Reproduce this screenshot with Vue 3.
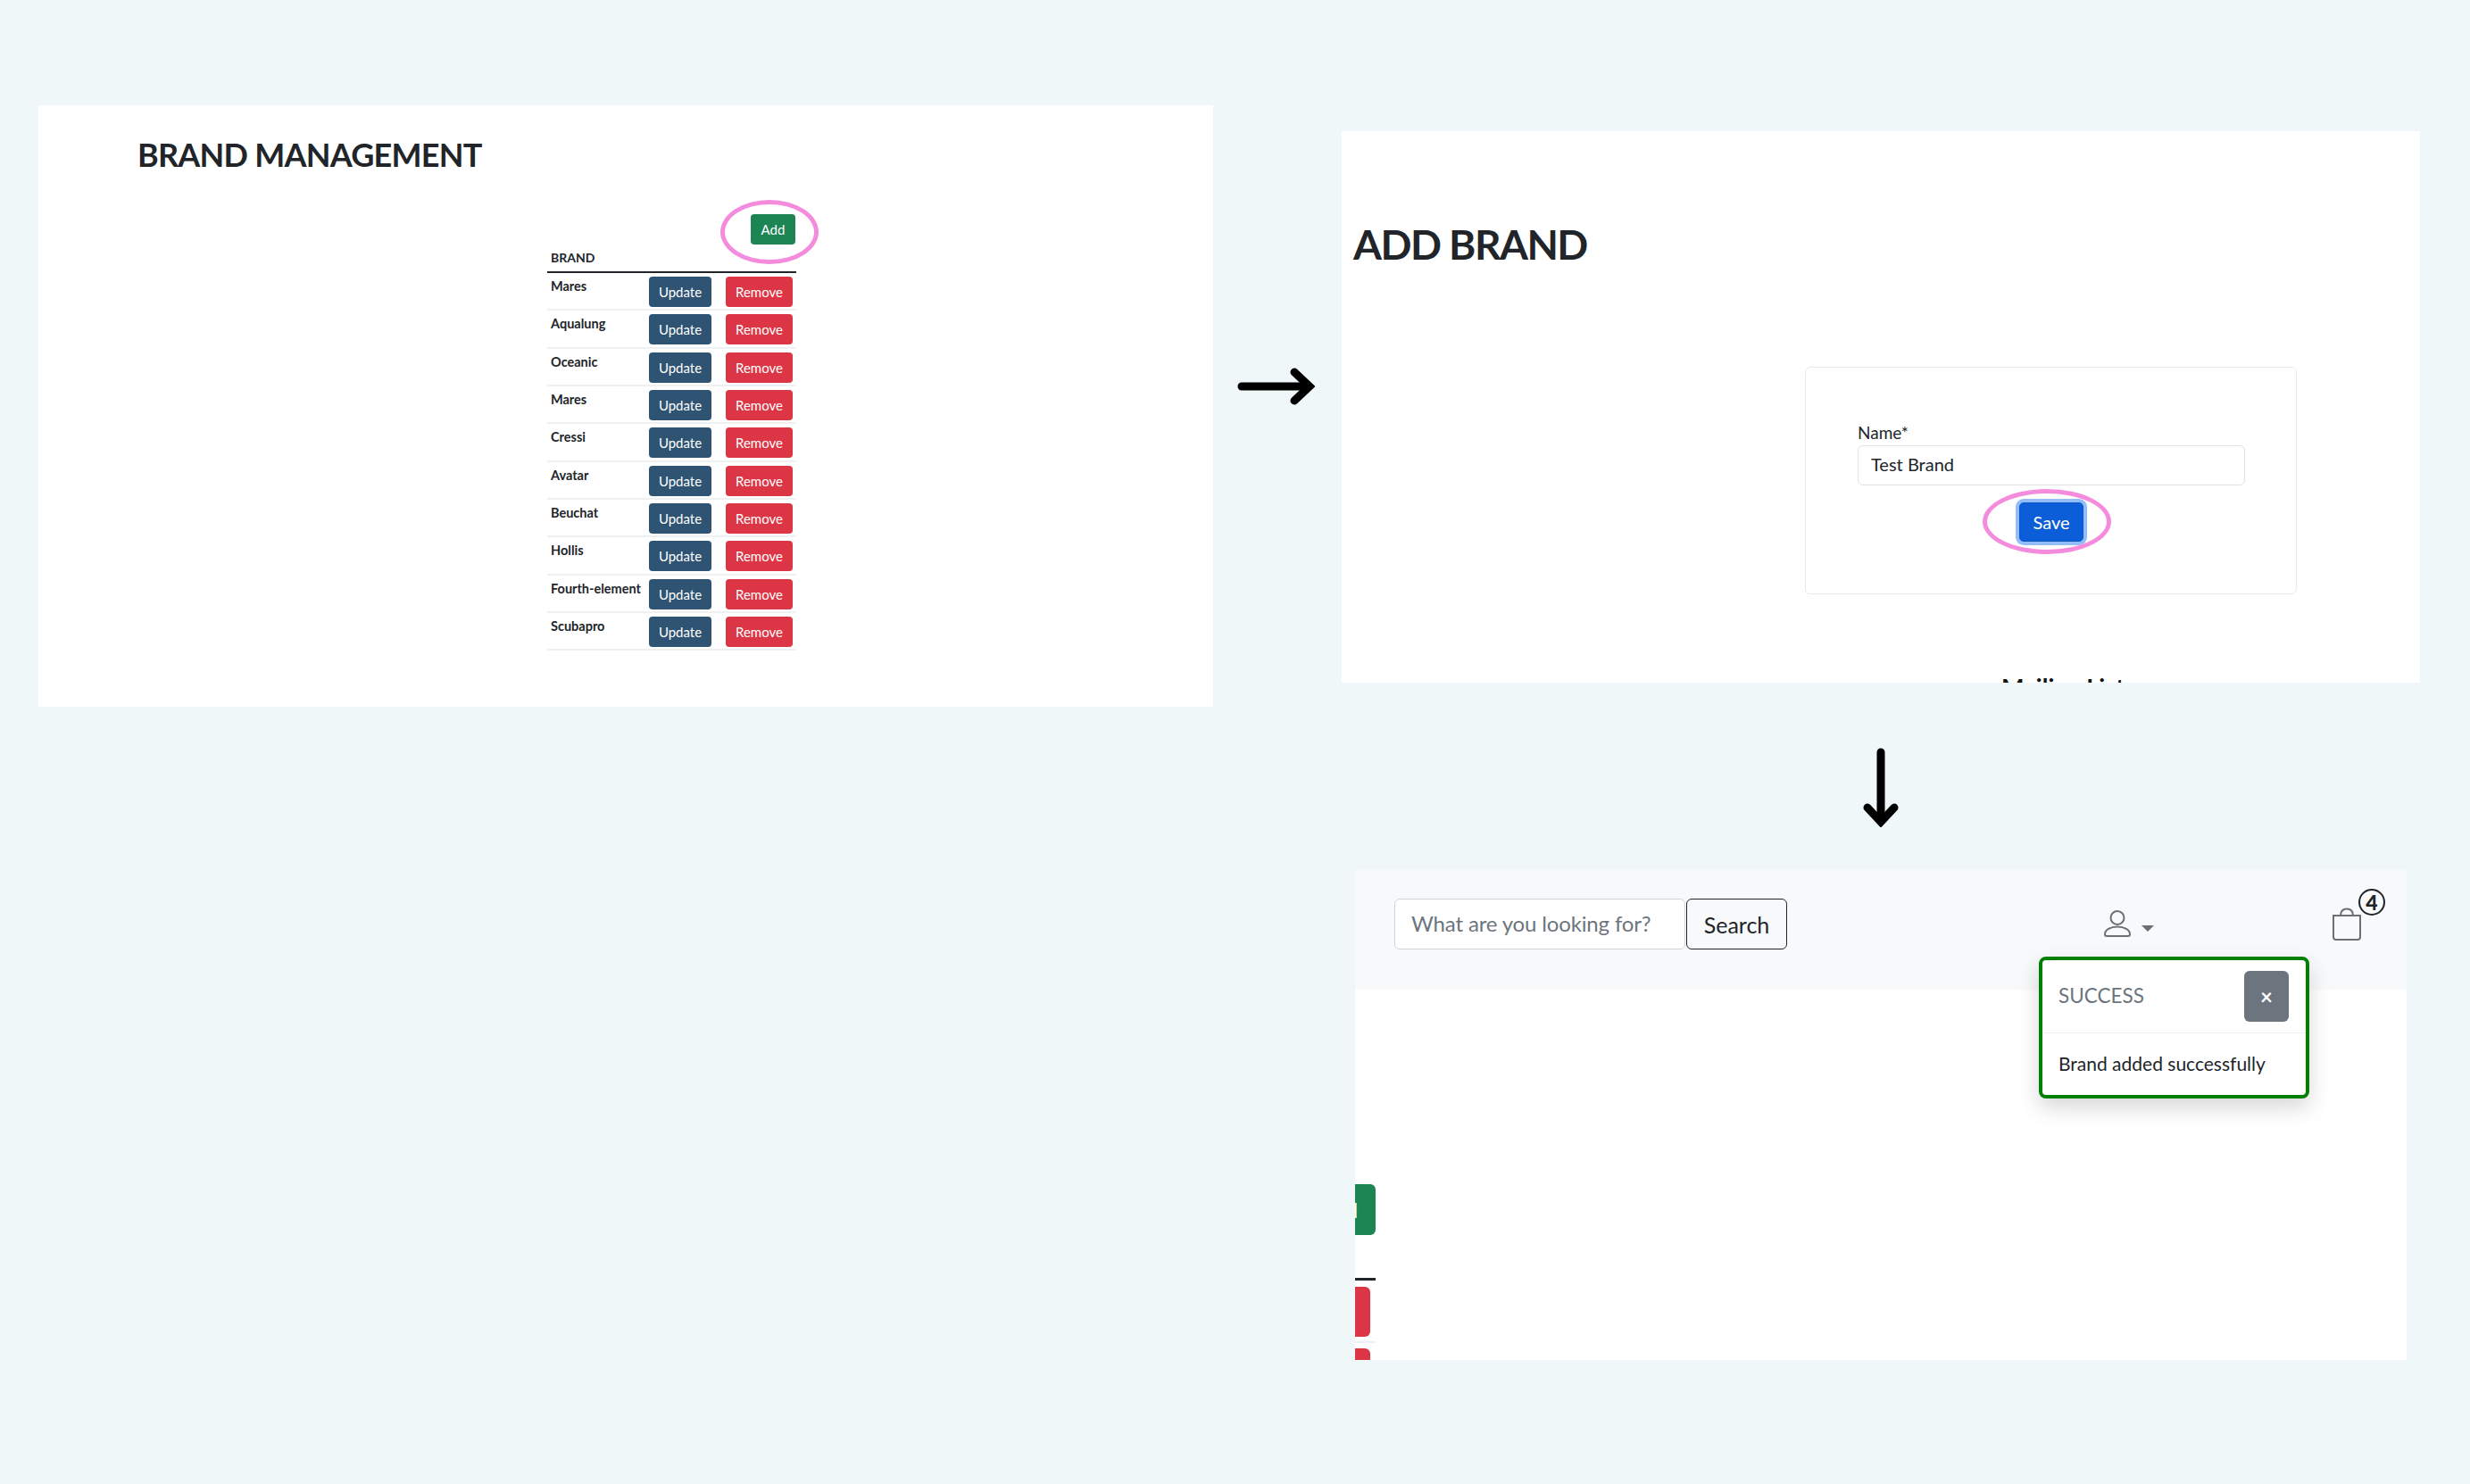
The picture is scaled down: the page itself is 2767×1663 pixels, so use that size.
<script setup>
const brands = ['Mares', 'Aqualung', 'Oceanic', 'Mares', 'Cressi', 'Avatar', 'Beuchat', 'Hollis', 'Fourth-element', 'Scubapro'];
</script>

<template>
  <div class="canvas">
    <section class="panel panel-list">
      <h1 class="list-title">BRAND MANAGEMENT</h1>
      <div class="table-wrap">
        <div class="toolbar">
          <button class="btn btn-add">Add</button>
        </div>
        <div class="table-head">BRAND</div>
        <div v-for="(brand, i) in brands" :key="i" class="table-row">
          <span class="brand-name">{{ brand }}</span>
          <button class="btn btn-update">Update</button>
          <button class="btn btn-remove">Remove</button>
        </div>
        <span class="ring ring-add"></span>
      </div>
    </section>

    <div class="arrow-right">
      <svg width="90" height="44" viewBox="0 0 90 44" fill="none" stroke="#000" stroke-width="9" stroke-linecap="round">
        <path d="M8 22H81" />
        <path d="M67 6L84 22L67 38" stroke-linejoin="miter" />
      </svg>
    </div>

    <div class="right-col">
      <section class="panel panel-form">
        <h1 class="form-title">ADD BRAND</h1>
        <div class="card">
          <label class="field-label">Name*</label>
          <div class="field-input">Test Brand</div>
          <div class="save-row">
            <button class="btn btn-save">Save</button>
            <span class="ring ring-save"></span>
          </div>
        </div>
        <div class="mailing">Mailing List</div>
      </section>

      <div class="arrow-down">
        <svg width="46" height="92" viewBox="0 0 46 92" fill="none" stroke="#000" stroke-width="9" stroke-linecap="round">
          <path d="M23 8V84" />
          <path d="M8 70L23 86L38 70" stroke-linejoin="miter" />
        </svg>
      </div>

      <section class="panel panel-shop">
        <header class="shop-bar">
          <div class="search-input">What are you looking for?</div>
          <button class="search-btn">Search</button>
          <div class="user-menu">
            <svg width="32" height="32" viewBox="0 0 32 32" fill="none" stroke="#6d6f71" stroke-width="2">
              <circle cx="16" cy="9.5" r="7.5" />
              <path d="M2 28c0-5 6-8.500 14-8.500s14 3.500 14 8.500c0 1.300-.8 2-2 2H4c-1.200 0-2-.7-2-2z" />
            </svg>
            <span class="caret"></span>
          </div>
          <div class="cart">
            <svg width="34" height="38" viewBox="0 0 34 38" fill="none" stroke="#6d6f71" stroke-width="2">
              <path d="M2 9H32V33a3 3 0 0 1-3 3H5a3 3 0 0 1-3-3z" />
              <path d="M10 9c0-5 3-7.500 7-7.500S24 4 24 9" />
            </svg>
            <span class="cart-badge">4</span>
          </div>
        </header>

        <div class="cut-off">
          <button class="btn cut-add">Add</button>
          <div class="cut-line"></div>
          <div class="cut-remove"></div>
          <div class="cut-sep"></div>
          <div class="cut-remove cut-last"></div>
        </div>

        <div class="toast">
          <div class="toast-head">
            <span class="toast-title">SUCCESS</span>
            <button class="toast-close">×</button>
          </div>
          <div class="toast-body">Brand added successfully</div>
        </div>
      </section>
    </div>
  </div>
</template>

<style>
html,
body {
  margin: 0;
  background: #f0f7f9;
}
</style>

<style scoped>
.canvas {
  display: flex;
  align-items: flex-start;
  width: 2767px;
  height: 1663px;
  padding: 118px 0 0 43px;
  box-sizing: border-box;
  background: #f0f7f9;
  font-family: Lato, "Open Sans", sans-serif;
  color: #212529;
}

.panel {
  background: #fff;
  box-sizing: border-box;
  overflow: hidden;
}

.btn {
  border: 1px solid transparent;
  border-radius: 4px;
  color: #fff;
  font-family: inherit;
  padding: 0;
  box-sizing: border-box;
}

/* brand list */
.panel-list {
  width: 1316px;
  height: 674px;
  flex: none;
  padding: 33px 0 0 111px;
}

.list-title {
  margin: 0 0 45px;
  font-size: 36px;
  line-height: 44px;
  font-weight: 700;
  letter-spacing: -0.75px;
}

.table-wrap {
  position: relative;
  width: 279px;
  margin-left: 459px;
}

.toolbar {
  display: flex;
  justify-content: flex-end;
  padding-right: 1px;
}

.btn-add {
  width: 50px;
  height: 34px;
  background: #1c8553;
  font-size: 15px;
}

.table-head {
  height: 32px;
  padding: 5px 0 0 4px;
  box-sizing: border-box;
  border-bottom: 2px solid #212529;
  font-size: 14px;
  line-height: 20px;
  font-weight: 700;
}

.table-row {
  display: flex;
  height: 42.33px;
  padding: 4px 0 0 4px;
  box-sizing: border-box;
  border-bottom: 2px solid #eff0f1;
}

.brand-name {
  width: 110px;
  padding-top: 1px;
  font-size: 14.500px;
  line-height: 20px;
  font-weight: 700;
  white-space: nowrap;
}

.btn-update {
  width: 70px;
  height: 34px;
  background: #2f5372;
  font-size: 15px;
  line-height: 30px;
}

.btn-remove {
  width: 75px;
  height: 34px;
  margin-left: 16px;
  background: #dc3545;
  font-size: 15px;
  line-height: 30px;
}

.ring {
  position: absolute;
  border: 5px solid #f58bdd;
  border-radius: 50%;
  box-sizing: border-box;
}

.ring-add {
  left: 194px;
  top: -16px;
  width: 110px;
  height: 72px;
}

.arrow-right {
  width: 120px;
  flex: none;
  margin: 293px 0 0 24px;
}

.arrow-right svg,
.arrow-down svg {
  display: block;
}

/* add brand form */
.right-col {
  width: 1208px;
  flex: none;
  margin-top: 29px;
}

.panel-form {
  height: 618px;
  padding: 98px 0 0 13px;
}

.form-title {
  margin: 0 0 108px;
  font-size: 46px;
  line-height: 58px;
  font-weight: 700;
  letter-spacing: -1.500px;
}

.card {
  width: 551px;
  height: 255px;
  margin-left: 506px;
  padding: 59px 57px 0 58px;
  box-sizing: border-box;
  border: 1px solid #e9eaec;
  border-radius: 6px;
}

.field-label {
  display: block;
  height: 28px;
  font-size: 19px;
  line-height: 27px;
}

.field-input {
  height: 45px;
  padding-left: 14px;
  box-sizing: border-box;
  border: 1px solid #dee2e6;
  border-radius: 6px;
  font-size: 20px;
  line-height: 41px;
}

.save-row {
  position: relative;
  display: flex;
  justify-content: center;
  margin-top: 19px;
}

.btn-save {
  width: 72px;
  height: 44px;
  background: #0b5ed7;
  border-color: #0a58ca;
  border-radius: 5px;
  box-shadow: 0 0 0 4px #93bcf8;
  font-size: 20px;
  line-height: 38px;
}

.ring-save {
  left: 140px;
  top: -15px;
  width: 144px;
  height: 73px;
}

.mailing {
  margin: 84px 0 0 726px;
  font-size: 27px;
  line-height: 40px;
  font-weight: 700;
  color: #111;
  white-space: nowrap;
}

.arrow-down {
  height: 210px;
  padding: 70px 0 0 581px;
  box-sizing: border-box;
}

/* shop page with toast */
.panel-shop {
  position: relative;
  width: 1178px;
  height: 549px;
  margin-left: 15px;
}

.shop-bar {
  display: flex;
  align-items: flex-start;
  height: 134px;
  padding: 32px 0 0 44px;
  box-sizing: border-box;
  background: #f8f9fa;
}

.search-input {
  width: 326px;
  height: 57px;
  padding-left: 18px;
  box-sizing: border-box;
  background: #fff;
  border: 1px solid #ced4da;
  border-radius: 6px;
  color: #6c757d;
  font-size: 24px;
  line-height: 53px;
  letter-spacing: -0.150px;
  white-space: nowrap;
}

.search-btn {
  width: 113px;
  height: 57px;
  margin-left: 1px;
  background: transparent;
  border: 1px solid #212529;
  border-radius: 6px;
  color: #212529;
  font-family: inherit;
  font-size: 25px;
  line-height: 50px;
  padding: 0;
}

.user-menu {
  display: flex;
  align-items: flex-start;
  margin: 12px 0 0 354px;
}

.caret {
  width: 0;
  height: 0;
  margin: 18px 0 0 11px;
  border-left: 7px solid transparent;
  border-right: 7px solid transparent;
  border-top: 7px solid #6d6f71;
}

.cart {
  position: relative;
  margin: 10px 0 0 199px;
}

.cart-badge {
  position: absolute;
  left: 30px;
  top: -21px;
  width: 30px;
  height: 30px;
  box-sizing: border-box;
  border: 2px solid #212529;
  border-radius: 50%;
  font-size: 23px;
  line-height: 26px;
  font-weight: 900;
  text-align: center;
}

.cut-off {
  width: 23px;
  overflow: hidden;
}

.cut-add {
  display: block;
  width: 69px;
  height: 57px;
  margin: 218px 0 0 -46px;
  padding-left: 7px;
  background: #1c8553;
  border-radius: 6px;
  font-size: 23px;
  text-align: left;
}

.cut-line {
  height: 3px;
  margin-top: 48px;
  background: #212529;
}

.cut-remove {
  width: 30px;
  height: 56px;
  margin: 7px 0 0 -13px;
  background: #dc3545;
  border-radius: 6px;
}

.cut-sep {
  height: 2px;
  margin-top: 5px;
  background: #eff0f1;
}

.cut-last {
  margin-top: 6px;
}

.toast {
  position: absolute;
  left: 766px;
  top: 97px;
  width: 303px;
  height: 159px;
  box-sizing: border-box;
  background: #fff;
  border: 4px solid #008000;
  border-radius: 8px;
  box-shadow: 0 10px 24px rgba(0, 0, 0, 0.16);
}

.toast-head {
  display: flex;
  align-items: flex-start;
  justify-content: space-between;
  height: 82px;
  padding: 12px 19px 0 18px;
  box-sizing: border-box;
  border-bottom: 1px solid #eceef0;
}

.toast-title {
  margin-top: 14px;
  font-size: 22.500px;
  line-height: 27px;
  color: #6c757d;
}

.toast-close {
  width: 50px;
  height: 57px;
  background: #6c757d;
  border: none;
  border-radius: 6px;
  color: #fff;
  font-family: inherit;
  font-size: 24px;
  font-weight: 700;
  padding: 0;
}

.toast-body {
  padding: 20px 0 0 18px;
  font-size: 21px;
  line-height: 28px;
  white-space: nowrap;
}
</style>
